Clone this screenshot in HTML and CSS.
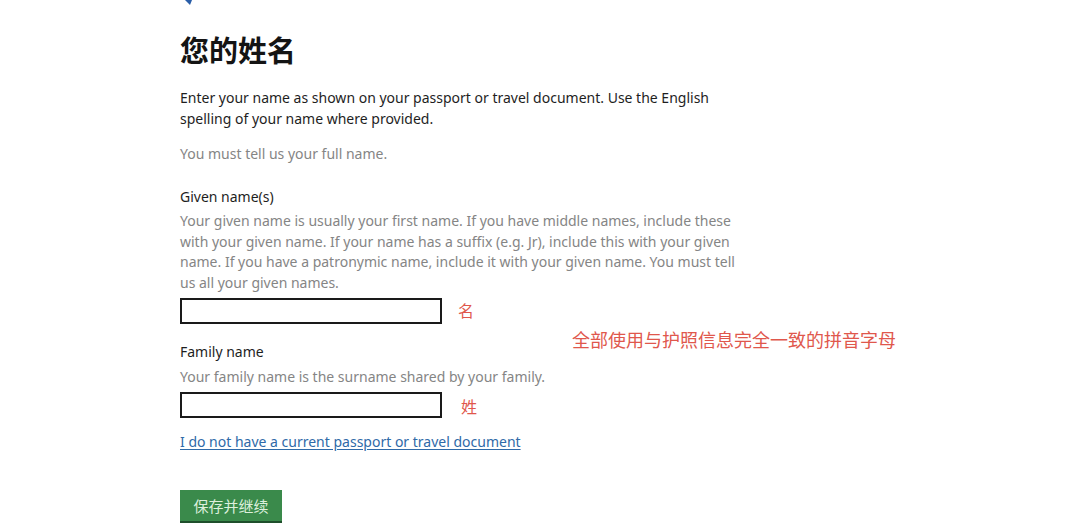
FILE: index.html
```html
<!DOCTYPE html>
<html lang="zh">
<head>
<meta charset="utf-8">
<title>您的姓名</title>
<link rel="stylesheet" href="styles.css">
</head>
<body>
<div class="page">
  <div class="back"><svg width="10" height="8" viewBox="0 0 10 8"><path d="M3 0 L10 0 L8 5 Z" fill="#2a5ea8"/></svg></div>
  <h1 class="title">您的姓名</h1>
  <p class="lead">Enter your name as shown on your passport or travel document. Use the English spelling of your name where provided.</p>
  <p class="must">You must tell us your full name.</p>

  <div class="field field-given">
    <label class="label">Given name(s)</label>
    <div class="hint">Your given name is usually your first name. If you have middle names, include these with your given name. If your name has a suffix (e.g. Jr), include this with your given name. If you have a patronymic name, include it with your given name. You must tell us all your given names.</div>
    <div class="input-row">
      <div class="input"></div>
      <span class="mark mark-given">名</span>
    </div>
    <div class="note">全部使用与护照信息完全一致的拼音字母</div>
  </div>

  <div class="field field-family">
    <label class="label">Family name</label>
    <div class="hint hint-family">Your family name is the surname shared by your family.</div>
    <div class="input-row">
      <div class="input"></div>
      <span class="mark mark-family">姓</span>
    </div>
  </div>

  <a class="link" href="#">I do not have a current passport or travel document</a>

  <div class="actions">
    <button class="btn" type="button">保存并继续</button>
  </div>
</div>
</body>
</html>
```
FILE: styles.css
```css
html, body {
  margin: 0;
  padding: 0;
  background: #ffffff;
}
body {
  font-family: "Noto Sans", "Noto Sans CJK SC", sans-serif;
  color: #0b0c0c;
}
.page {
  position: relative;
  padding-left: 180px;
  width: 560px;
}
.back {
  height: 0;
  position: relative;
}
.back svg {
  position: absolute;
  left: 2px;
  top: 0;
}
.title {
  margin: 0;
  padding-top: 31px;
  font-family: "Noto Sans CJK SC", sans-serif;
  font-size: 29px;
  line-height: 36px;
  font-weight: 700;
  color: #141414;
}
.lead {
  margin: 21px 0 0;
  font-size: 14px;
  line-height: 20.5px;
  color: #1e1e1e;
  width: 545px;
}
.must {
  margin: 15px 0 0;
  font-size: 14px;
  line-height: 20.5px;
  color: #858585;
}
.field {
  position: relative;
}
.field-given {
  margin-top: 22px;
}
.label {
  display: block;
  font-size: 14px;
  line-height: 20.5px;
  color: #1e1e1e;
}
.field-family .label {
  margin-top: 18px;
}
.hint {
  margin-top: 4px;
  font-size: 14px;
  line-height: 20.7px;
  color: #858585;
  width: 560px;
}
.hint-family {
  margin-top: 5px;
}
.input-row {
  display: flex;
  align-items: center;
  margin-top: 4px;
}
.input {
  width: 258px;
  height: 22px;
  border: 2px solid #1a1a1a;
  background: #fff;
}
.mark {
  font-family: "Noto Sans CJK SC", sans-serif;
  font-size: 16px;
  color: #e0574c;
  margin-left: 16px;
  position: relative;
  top: -1px;
}
.mark-family {
  margin-left: 19px;
  top: 1px;
}
.note {
  position: absolute;
  left: 392px;
  bottom: -26px;
  white-space: nowrap;
  font-family: "Noto Sans CJK SC", sans-serif;
  font-size: 18px;
  line-height: 22px;
  color: #e0574c;
}
.link {
  display: inline-block;
  margin-top: 14px;
  font-size: 14px;
  line-height: 20.5px;
  color: #2f6aa8;
  text-decoration: underline;
  text-underline-offset: 2px;
}
.actions {
  margin-top: 37px;
}
.btn {
  font-family: "Noto Sans CJK SC", sans-serif;
  font-size: 15px;
  line-height: 20px;
  color: #dcefdc;
  background: #3a8a4b;
  border: 0;
  border-bottom: 2px solid #1f4f2b;
  padding: 6px 11px 5px;
  width: 102px;
  text-align: center;
  cursor: pointer;
}
```
